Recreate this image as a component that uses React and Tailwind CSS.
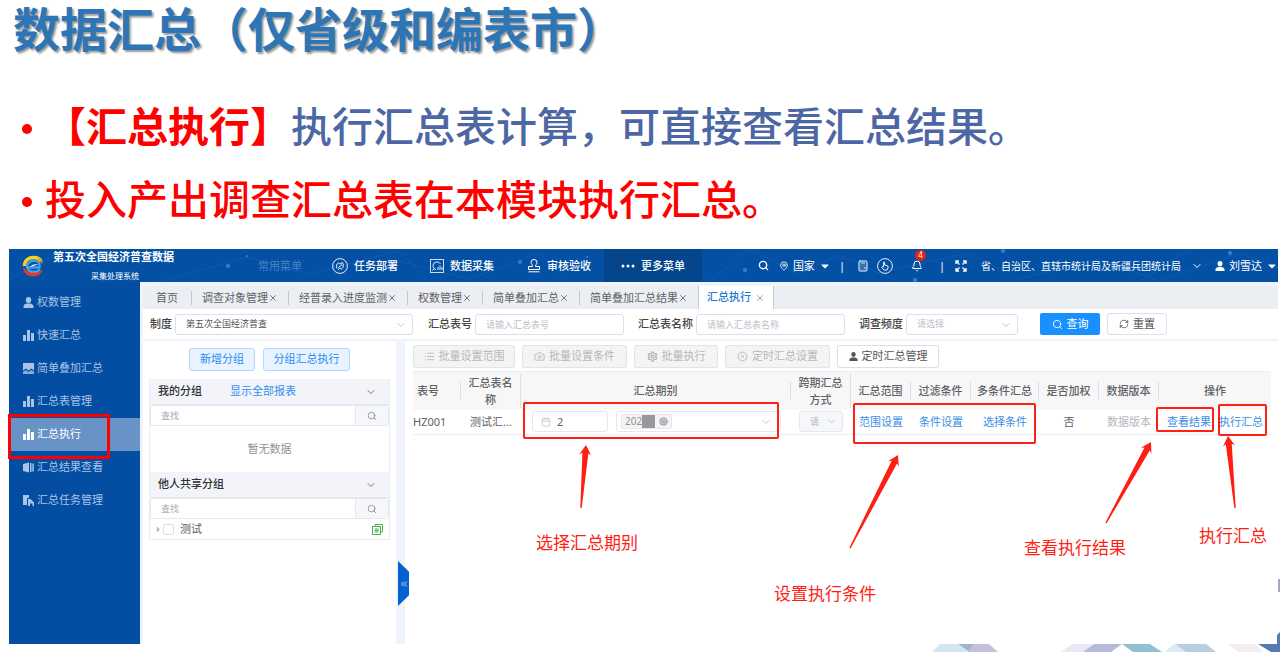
import {
  Camera,
  ChevronDown,
  ChevronsLeft,
  CircleX,
  Hexagon,
  List,
  MapPin,
  Bell,
  Calendar,
  Calculator,
  RefreshCw,
  Search,
  Settings,
  X,
} from 'lucide-react';
import React from 'react';
import { FaCaretDown, FaCaretRight } from 'react-icons/fa';

const RED = '#ff1e14';

const tabs = ['调查对象管理', '经普录入进度监测', '权数管理', '简单叠加汇总', '简单叠加汇总结果'];

const sideItems = [
  { label: '权数管理', icon: <PersonIcon className="size-[11px]" /> },
  { label: '快速汇总', icon: <BarsIcon /> },
  { label: '简单叠加汇总', icon: <PictureIcon /> },
  { label: '汇总表管理', icon: <BarsIcon /> },
  { label: '汇总执行', icon: <BarsIcon />, active: true },
  { label: '汇总结果查看', icon: <BookIcon /> },
  { label: '汇总任务管理', icon: <TaskIcon /> },
];

const columns = [
  { label: '表号', width: 'w-[48px]' },
  { label: '汇总表名称', width: 'w-[60px]' },
  { label: '汇总期别', width: '' },
  { label: '跨期汇总方式', width: 'w-[60px]' },
  { label: '汇总范围', width: 'w-[60px]' },
  { label: '过滤条件', width: 'w-[60px]' },
  { label: '多条件汇总', width: 'w-[68px]' },
  { label: '是否加权', width: 'w-[60px]' },
  { label: '数据版本', width: 'w-[60px]' },
  { label: '操作', width: 'w-[112px]' },
];

const arrows = [
  { tail: [572, 259], tip: [577, 196] },
  { tail: [841, 299], tip: [889, 206] },
  { tail: [1097, 274], tip: [1142, 193] },
  { tail: [1226, 259], tip: [1219, 187] },
];

function PersonIcon({ className }) {
  return (
    <svg viewBox="0 0 11 11" className={className} fill="currentColor">
      <ellipse cx="5.5" cy="3" rx="2.700" ry="3" />
      <path d="M0.500 11V9.500C0.500 7.500 2.500 7 4 6.600H7C8.500 7 10.500 7.500 10.500 9.500V11Z" />
    </svg>
  );
}

function BarsIcon() {
  return (
    <svg viewBox="0 0 11 11" className="size-[11px]" fill="currentColor">
      <rect x="0" y="5" width="3" height="6" />
      <rect x="4" y="0" width="3" height="11" />
      <rect x="8" y="3" width="3" height="8" />
    </svg>
  );
}

function PictureIcon() {
  return (
    <svg viewBox="0 0 11 11" className="size-[11px]" fill="currentColor">
      <path d="M0 0H11V7.500L8.500 5.500L5.500 7.500L3 5.500L0 7.500Z" />
      <path d="M0 8.800L3 7L5.500 9L8.500 7L11 8.800V11H0Z" fillOpacity="0.8" />
    </svg>
  );
}

function BookIcon() {
  return (
    <svg viewBox="0 0 11 11" className="size-[11px]" fill="currentColor">
      <path d="M0 2L6 0.500V10.500L0 9Z" />
      <rect x="7" y="1" width="1.500" height="9" />
      <rect x="9.300" y="1.500" width="1.500" height="8" />
    </svg>
  );
}

function TaskIcon() {
  return (
    <svg viewBox="0 0 11 11" className="size-[11px]" fill="currentColor">
      <path d="M0 0H6V3H4V10H0Z" />
      <path d="M5 4H7.500L11 7.500V11H9.500V8.500H7V11H5Z" />
    </svg>
  );
}

function Logo() {
  return (
    <svg viewBox="0 0 22 22" className="size-[22px] shrink-0" fill="none">
      <path d="M2.500 11C2.500 5 7 2.500 11.500 2.500C15 2.500 18 4 19 6.500" stroke="#f7d417" strokeWidth="3.500" />
      <path d="M15.500 2.500C18.500 3.500 20.500 6 20.700 9L17.500 6.500Z" fill="#f08a1d" />
      <path d="M1 11C1 18 5.500 21.500 11 21.500C15.500 21.500 19.500 19 20.800 14.500C15 18.500 4.500 19 1 11Z" fill="#e5352c" />
      <path
        d="M5.500 12.500H17.500C18.500 8 15.500 5.500 12 5.500C8 5.500 5 8.500 5 11.800C5 15 8 16.800 11.500 16.800C14 16.800 16.500 16 18 14.500"
        stroke="#3fa3ea"
        strokeWidth="2.400"
      />
      <path d="M8 12C10 9.500 13 9 16 9.500C14 10 12 11 8 12Z" fill="#fff" />
    </svg>
  );
}

function StampIcon() {
  return (
    <svg viewBox="0 0 14 14" className="size-[14px]" fill="none" stroke="currentColor">
      <path d="M5.500 7.500C5.500 5.500 4 5 4 3.200A3 2.700 0 0 1 10 3.200C10 5 8.500 5.500 8.500 7.500H12.500V10.500H1.500V7.500Z M1.500 12.800H12.500" />
    </svg>
  );
}

function DeployIcon() {
  return (
    <svg viewBox="0 0 16 16" className="size-4" fill="none" stroke="currentColor">
      <circle cx="8" cy="8" r="7.400" strokeWidth="0.9" />
      <path
        d="M5 10.500C4 8 4.500 5.500 6.500 5L8 6L10.500 4.500C12 6.500 11.500 10 9.500 11L8 10L6 11.500M6.500 9.500L10 6.500"
        strokeWidth="0.9"
      />
    </svg>
  );
}

function CollectIcon() {
  return (
    <svg viewBox="0 0 14 14" className="size-[14px]" fill="none" stroke="currentColor">
      <rect x="0.500" y="0.500" width="13" height="13" strokeOpacity="0.8" />
      <path d="M6 10.500C3.500 10 3 8 3 6.500A4 4 0 0 1 10.500 5M2.500 11.500L4 9.500M8 11V8M10 11V6.500M12 11V8" strokeWidth="0.9" />
    </svg>
  );
}

function HandIcon() {
  return (
    <svg viewBox="0 0 16 16" className="size-4" fill="none" stroke="currentColor">
      <circle cx="8" cy="8" r="7.400" strokeWidth="0.9" />
      <path d="M6.500 9V4.200Q7 3.500 7.600 4.200V7L11 8V10L10 12H7L4.600 9.200Q5.200 8 6.500 9Z" strokeWidth="0.9" />
    </svg>
  );
}

function ExpandIcon() {
  return (
    <svg viewBox="0 0 12 12" className="size-3" fill="none" stroke="currentColor" strokeWidth="1.300">
      <path d="M1 4V1H4M1 1L4.500 4.500M8 1H11V4M11 1L7.500 4.500M1 8V11H4M1 11L4.500 7.500M11 8V11H8M11 11L7.500 7.500" />
    </svg>
  );
}

function CopyIcon() {
  return (
    <svg viewBox="0 0 11 11" className="size-[11px]" fill="none" stroke="#4caf50">
      <path d="M3 2.500V0.500H10.500V8H8.500" />
      <rect x="0.500" y="2.500" width="8" height="8" />
      <path d="M2.500 5H6.500M2.500 6.500H6.500M2.500 8H6.500" />
    </svg>
  );
}

function HeaderPattern() {
  return (
    <svg className="pointer-events-none absolute inset-0 h-full w-full" stroke="#3f86c9" fill="#2f80cf" strokeOpacity="0.2">
      <path
        d="M0 30L50 5L110 28L160 0M150 33L238 8L300 25L390 2L420 33M390 12L460 30L530 4L560 33M700 33L740 0L790 25L830 6L890 33M860 26L960 4L1010 30L1090 10L1150 32L1230 4L1271 20M1130 33L1180 0"
        fill="none"
      />
      <circle cx="238" cy="7" r="1" />
      <circle cx="219" cy="17" r="2" />
      <circle cx="511" cy="13" r="2" />
      <circle cx="578" cy="8" r="1" />
      <circle cx="736" cy="21" r="2" />
      <circle cx="994" cy="2" r="2" />
      <circle cx="906" cy="31" r="2" />
      <circle cx="1221" cy="4" r="2" />
    </svg>
  );
}

function TopBar() {
  return (
    <header className="relative flex h-[33px] items-center bg-[#0450a5] text-[11px] leading-4 text-white">
      <HeaderPattern />
      <div className="relative flex w-[249px] items-center gap-[9px] pl-[13px]">
        <Logo />
        <div className="w-[125px] whitespace-nowrap">
          <div className="font-bold leading-[14px]">第五次全国经济普查数据</div>
          <div className="mt-[6px] pl-[38px] text-[8px] leading-[12px]">采集处理系统</div>
        </div>
      </div>
      <nav className="relative flex h-full items-center whitespace-nowrap">
        <span className="w-[74px] text-[#4a82c2]">常用菜单</span>
        <a href="#deploy" className="flex w-[98px] items-center gap-1.5 font-medium">
          <DeployIcon />
          任务部署
        </a>
        <a href="#collect" className="flex w-[97px] items-center gap-1.5 font-medium">
          <CollectIcon />
          数据采集
        </a>
        <a href="#review" className="flex w-[77px] items-center gap-1.5 font-medium">
          <StampIcon />
          审核验收
        </a>
        <button type="button" className="flex h-full w-[98px] items-center justify-center gap-1.5 bg-[#04458c] font-medium">
          <svg viewBox="0 0 14 4" className="h-1 w-3.5" fill="currentColor">
            <circle cx="2" cy="2" r="1.500" />
            <circle cx="7" cy="2" r="1.500" />
            <circle cx="12" cy="2" r="1.500" />
          </svg>
          更多菜单
        </button>
      </nav>
      <div className="relative ml-auto flex items-center whitespace-nowrap">
        <button type="button" aria-label="搜索" className="mr-2.5">
          <Search className="size-[11px]" strokeWidth={3} />
        </button>
        <button type="button" className="flex items-center gap-1">
          <MapPin className="size-[10px]" />
          国家
          <FaCaretDown className="size-3" />
        </button>
        <span className="ml-2 mr-3">|</span>
        <Calculator className="size-3" />
        <span className="ml-2">
          <HandIcon />
        </span>
        <button type="button" aria-label="消息" className="relative ml-[18px]">
          <Bell className="size-3" />
          <span className="absolute -top-2.5 left-1 flex size-[11px] items-center justify-center rounded-full bg-[#e2240f] text-[8px] leading-none">
            4
          </span>
        </button>
        <span className="ml-4 mr-2.5">|</span>
        <ExpandIcon />
        <button type="button" className="ml-3.5 flex items-center gap-2.5 text-[10px]">
          省、自治区、直辖市统计局及新疆兵团统计局
          <ChevronDown className="size-3" />
        </button>
        <button type="button" className="ml-3 flex items-center gap-1">
          <PersonIcon className="size-[10px]" />
          刘雪达
          <FaCaretDown className="size-3" />
        </button>
      </div>
    </header>
  );
}

function Sidebar() {
  return (
    <aside className="w-[131px] shrink-0 bg-[#034ea2] pt-1">
      {sideItems.map((item) => (
        <a
          key={item.label}
          href={`#${item.label}`}
          className={[
            'flex h-[33px] items-center gap-[3px] pl-[14px] text-[11px]',
            item.active ? 'bg-[#6893c6] text-white' : 'text-[#a9c4e4]',
          ].join(' ')}
        >
          <span className="flex w-[11px] justify-center">{item.icon}</span>
          {item.label}
        </a>
      ))}
    </aside>
  );
}

function TabBar() {
  return (
    <div className="flex h-[23px] items-center whitespace-nowrap rounded-t bg-[#ebeef2] text-[11px] text-[#606266]">
      <a href="#home" className="border-r border-[#c4c7cc] px-[13px] leading-[14px]">
        首页
      </a>
      {tabs.map((tab, i) => (
        <span
          key={tab}
          className={[
            'flex items-center px-[10px] leading-[14px]',
            i < tabs.length - 1 ? 'border-r border-[#c4c7cc]' : '',
          ].join(' ')}
        >
          {tab}
          <button type="button" aria-label={`关闭${tab}`}>
            <X className="size-[10px]" />
          </button>
        </span>
      ))}
      <span className="flex h-full items-center gap-1 border-x border-[#c4c7cc] bg-white px-2 font-medium text-[#2479d8]">
        汇总执行
        <button type="button" aria-label="关闭汇总执行">
          <X className="size-[10px] text-[#909399]" />
        </button>
      </span>
    </div>
  );
}

function Select({ id, label, value, className, textClass }) {
  return (
    <span className={`relative block ${className}`}>
      <select
        id={id}
        aria-label={label}
        className={`h-[21px] w-full appearance-none rounded-[3px] border border-[#dcdfe6] bg-white pl-2.5 text-[9px] ${textClass}`}
      >
        <option>{value}</option>
      </select>
      <ChevronDown className="pointer-events-none absolute right-1.5 top-[5px] size-3 text-[#c0c4cc]" />
    </span>
  );
}

function Filters() {
  const inputClass =
    'h-[21px] w-[149px] rounded-[3px] border border-[#dcdfe6] bg-white px-2.5 text-[9px] placeholder:text-[#bcc0c8]';
  const labelClass = 'whitespace-nowrap font-medium text-[#444]';
  return (
    <form className="flex h-[30px] items-center bg-white pl-[7px] text-[11px]">
      <label htmlFor="system" className={`${labelClass} mr-[3px]`}>
        制度
      </label>
      <Select id="system" value="第五次全国经济普查" className="w-[238px]" textClass="text-[#555]" />
      <label htmlFor="code" className={`${labelClass} ml-[15px] mr-[3px]`}>
        汇总表号
      </label>
      <input id="code" placeholder="请输入汇总表号" className={inputClass} />
      <label htmlFor="name" className={`${labelClass} ml-[14px] mr-[3px]`}>
        汇总表名称
      </label>
      <input id="name" placeholder="请输入汇总表名称" className={inputClass} />
      <label htmlFor="freq" className={`${labelClass} ml-[14px] mr-[3px]`}>
        调查频度
      </label>
      <Select id="freq" value="请选择" className="w-[112px]" textClass="text-[#bcc0c8]" />
      <button type="button" className="ml-[22px] flex h-[22px] w-[60px] items-center justify-center gap-1 rounded-[2px] bg-[#1890ff] text-white">
        <Search className="size-[11px]" />
        查询
      </button>
      <button
        type="button"
        className="ml-[7px] flex h-[22px] w-[60px] items-center justify-center gap-1 rounded-[3px] border border-[#dcdfe6] text-[#555]"
      >
        <RefreshCw className="size-[10px]" />
        重置
      </button>
    </form>
  );
}

function GroupSearch({ label }) {
  return (
    <div className="flex h-[21px] rounded-[3px] border border-[#e4e7ed]">
      <input aria-label={label} placeholder="查找" className="min-w-0 flex-1 px-2.5 text-[9px] placeholder:text-[#a8abb2]" />
      <button type="button" aria-label={`搜索${label}`} className="flex w-[33px] items-center justify-center border-l border-[#e4e7ed] bg-[#f5f7fa]">
        <Search className="size-[10px] text-[#888]" />
      </button>
    </div>
  );
}

function GroupHeader({ title, children }) {
  return (
    <div className="flex h-[26px] items-center border-b border-[#e3e5ea] bg-[#f3f4f9] pl-2 pr-3">
      <span className="font-medium text-[#303133]">{title}</span>
      {children}
      <ChevronDown className="ml-auto size-3 text-[#777]" />
    </div>
  );
}

function GroupPanel() {
  const blueButton = 'h-[23px] rounded-[3px] border border-[#b3d8ff] bg-[#e8f3ff] text-[#1f8cf5]';
  return (
    <section className="w-[253px] shrink-0 bg-white px-[6px] pt-[7px] text-[11px]">
      <div className="flex justify-center gap-2">
        <button type="button" className={`${blueButton} w-[66px]`}>
          新增分组
        </button>
        <button type="button" className={`${blueButton} w-[87px]`}>
          分组汇总执行
        </button>
      </div>
      <div className="mt-2 border border-t-0 border-[#ebedf2]">
        <GroupHeader title="我的分组">
          <a href="#all" className="ml-[28px] text-[#2f8ff0]">
            显示全部报表
          </a>
        </GroupHeader>
        <GroupSearch label="我的分组" />
        <p className="flex h-[46px] items-center justify-center text-[#909399]">暂无数据</p>
        <GroupHeader title="他人共享分组" />
        <GroupSearch label="他人共享分组" />
        <div className="flex h-5 items-center pl-1 pr-1.5 text-[#606266]">
          <FaCaretRight className="size-[9px] text-[#b0b4bb]" />
          <label className="flex items-center gap-1.5">
            <input type="checkbox" className="size-[11px] appearance-none rounded-[2px] border border-[#dcdfe6] bg-white" />
            测试
          </label>
          <span className="ml-auto">
            <CopyIcon />
          </span>
        </div>
      </div>
    </section>
  );
}

function Toolbar() {
  const base = 'flex h-[23px] items-center justify-center gap-1 rounded-[2px] border';
  const disabled = `${base} border-[#e2e4e8] bg-[#f4f4f5] text-[#b4b7bc]`;
  return (
    <div className="flex whitespace-nowrap text-[11px]">
      <button type="button" disabled className={`${disabled} w-[102px]`}>
        <List className="size-[11px]" />
        批量设置范围
      </button>
      <button type="button" disabled className={`${disabled} ml-[7px] w-[105px]`}>
        <Camera className="size-[11px]" />
        批量设置条件
      </button>
      <button type="button" disabled className={`${disabled} ml-[7px] w-[84px]`}>
        <Settings className="size-[11px]" strokeWidth={3} />
        批量执行
      </button>
      <button type="button" disabled className={`${disabled} ml-[7px] w-[105px]`}>
        <span className="relative flex items-center justify-center">
          <Hexagon className="size-[11px]" />
          <i className="absolute size-[3px] rounded-full border border-current" />
        </span>
        定时汇总设置
      </button>
      <button type="button" className={`${base} ml-[7px] w-[102px] border-[#dcdfe6] bg-white text-[#555]`}>
        <PersonIcon className="size-[9px]" />
        定时汇总管理
      </button>
    </div>
  );
}

function PeriodCell() {
  return (
    <div className="flex gap-2 pl-[11px] pr-[10px]">
      <label className="flex h-[21px] w-[76px] items-center gap-1.5 rounded-[3px] border border-[#e4e7ed] pl-2">
        <Calendar className="size-[10px] shrink-0 text-[#c0c4cc]" />
        <input aria-label="期别" defaultValue="2" className="w-full min-w-0 text-[#606266]" />
      </label>
      <div className="flex h-[21px] flex-1 items-center justify-between rounded-[3px] border border-[#e4e7ed] pl-1 pr-2">
        <span className="flex h-[15px] items-center rounded-[2px] border border-[#e6e8ec] bg-[#f4f4f5] px-[3px] text-[10px] text-[#909399]">
          202
          <span className="h-[13px] w-[13px] bg-[#96989c]" />
          <button type="button" aria-label="移除期别" className="ml-1">
            <CircleX className="size-[9px] fill-[#c0c4cc]" />
          </button>
        </span>
        <ChevronDown className="size-3 text-[#c0c4cc]" />
      </div>
    </div>
  );
}

function SummaryTable() {
  const link = 'text-[#3a8ee6]';
  return (
    <table className="mt-[3px] w-full table-fixed text-center text-[11px] text-[#606266]">
      <thead className="bg-[#f7f7f8]">
        <tr className="h-[38px]">
          {columns.map((col, i) => (
            <th key={col.label} className={`border-t border-[#ebeef5] p-0 font-medium leading-[17px] ${col.width}`}>
              <div
                className={[
                  'px-1',
                  i < columns.length - 1 ? 'border-r border-[#dcdfe6]' : '',
                  i === 0 ? 'text-left' : '',
                ].join(' ')}
              >
                {col.label}
              </div>
            </th>
          ))}
        </tr>
      </thead>
      <tbody>
        <tr className="h-[25px] whitespace-nowrap border-b border-[#ebeef5]">
          <td className="text-left">HZ001</td>
          <td>测试汇...</td>
          <td>
            <PeriodCell />
          </td>
          <td className="px-2">
            <span className="relative block">
              <select
                aria-label="跨期汇总方式"
                disabled
                className="h-[21px] w-full appearance-none rounded-[3px] border border-[#e4e7ed] bg-[#f5f7fa] pl-2.5 text-[9px] text-[#b4b8c0]"
              >
                <option>请</option>
              </select>
              <ChevronDown className="absolute right-1.5 top-[5px] size-[11px] text-[#c0c4cc]" />
            </span>
          </td>
          <td>
            <a href="#range" className={link}>范围设置</a>
          </td>
          <td>
            <a href="#filter" className={link}>条件设置</a>
          </td>
          <td>
            <a href="#multi" className={link}>选择条件</a>
          </td>
          <td>否</td>
          <td className="text-[#b4b7bc]">数据版本</td>
          <td>
            <span className="flex justify-center gap-2">
              <a href="#result" className={link}>查看结果</a>
              <a href="#run" className={link}>执行汇总</a>
            </span>
          </td>
        </tr>
      </tbody>
    </table>
  );
}

function arrowPoints({ tail, tip }) {
  const [x1, y1] = tail;
  const [x2, y2] = tip;
  const len = Math.hypot(x2 - x1, y2 - y1);
  const ux = (x2 - x1) / len;
  const uy = (y2 - y1) / len;
  const at = (back, side) => `${x2 - ux * back - uy * side},${y2 - uy * back + ux * side}`;
  return [at(0, 0), at(10, 6), at(8, 3), at(len, 0.7), at(len, -0.7), at(8, -3), at(10, -6)].join(' ');
}

// Red marks that lie over the running screen.
function Annotations() {
  const frame = 'absolute rounded-[2px] border-2 border-[#ff1e14]';
  const note = 'absolute whitespace-nowrap text-[17px] leading-6 text-[#ff1e14]';
  return (
    <div className="pointer-events-none absolute inset-0">
      <div className="absolute -left-px top-[165px] h-[45px] w-[102px] border-[3px] border-[#fe0000]" />
      <div className={`${frame} left-[514px] top-[153px] h-[37px] w-[256px]`} />
      <div className={`${frame} left-[844px] top-[154px] h-[41px] w-[183px]`} />
      <div className={`${frame} left-[1147px] top-[158px] h-[25px] w-[58px]`} />
      <div className={`${frame} left-[1209px] top-[155px] h-[32px] w-[49px]`} />
      <svg className="absolute inset-0 h-full w-full" fill={RED}>
        {arrows.map((arrow) => (
          <polygon key={arrow.tail.join()} points={arrowPoints(arrow)} />
        ))}
      </svg>
      <span className={`${note} left-[527px] top-[282px]`}>选择汇总期别</span>
      <span className={`${note} left-[765px] top-[333px]`}>设置执行条件</span>
      <span className={`${note} left-[1015px] top-[287px]`}>查看执行结果</span>
      <span className={`${note} left-[1190px] top-[275px]`}>执行汇总</span>
    </div>
  );
}

function SlideDecoration() {
  return (
    <svg className="pointer-events-none absolute bottom-0 right-0 h-[74px] w-[350px]" viewBox="0 0 350 74">
      <path d="M348 1h2v13h-2z" fill="#a6a6d2" />
      <path d="M10 66H28L42 74H2Z" fill="#d3e6ee" />
      <path d="M28 66H45V74H40Z" fill="#9fb3cf" />
      <path d="M43 66H59L68 74H38Z" fill="#c3bfdc" />
      <path d="M142 66H164L153 74H131Z" fill="#e8e9f4" />
      <path d="M164 66H192L181 74H153Z" fill="#b7b9db" />
      <path d="M192 66H220L232 74H203Z" fill="#92bfd1" />
      <path d="M244 66H252L262 74H235Z" fill="#d9ecf2" />
      <path d="M246 66H276L286 74H256Z" fill="#b8cde1" />
      <path d="M298 66H325L333 74H308Z" fill="#f3edf2" />
      <path d="M328 66H347V57L350 54V74H341Z" fill="#5879b3" />
    </svg>
  );
}

export default function App() {
  return (
    <div className="relative min-h-screen bg-white pb-2 pl-[9px] pr-[2px] font-['Noto_Sans','Noto_Sans_CJK_SC',sans-serif]">
      <div className="whitespace-nowrap font-['Liberation_Sans','Noto_Sans_CJK_SC',sans-serif]">
        <h1 className="pl-1 text-[47px] font-bold leading-[61px] text-[#2e75b6] [text-shadow:2px_2px_2px_rgba(0,0,0,0.4)]">
          数据汇总（仅省级和编表市）
        </h1>
        <ul className="mt-[31px] pl-[10px] text-[41px] font-medium leading-[73px]">
          <li className="flex text-[#4d67a5]">
            <span className="flex w-[26px] items-center pl-[3px]">
              <i className="size-[10px] rounded-full bg-[#fe0000]" />
            </span>
            <b className="text-[#fe0000]">【汇总执行】</b>
            执行汇总表计算，可直接查看汇总结果。
          </li>
          <li className="flex text-[#fe0000]">
            <span className="flex w-[26px] items-center pl-[3px]">
              <i className="size-[10px] rounded-full bg-[#fe0000]" />
            </span>
            投入产出调查汇总表在本模块执行汇总。
          </li>
        </ul>
      </div>

      <div className="relative mt-[11px] flex flex-col">
        <TopBar />
        <div className="flex min-h-[362px]">
          <Sidebar />
          <div className="flex min-w-0 flex-1 flex-col bg-[#eef3fc] pl-[3px] pt-1">
            <TabBar />
            <Filters />
            <div className="mt-[2px] flex flex-1 gap-[9px]">
              <GroupPanel />
              <section className="relative min-w-0 flex-1 bg-white pl-2 pr-[7px] pt-1">
                <Toolbar />
                <SummaryTable />
                <button
                  type="button"
                  aria-label="收起分组"
                  className="absolute -left-[7px] top-[220px] flex h-[45px] w-[11px] items-center justify-center bg-[#0560d0] text-white [clip-path:polygon(0_0,100%_24%,100%_76%,0_100%)]"
                >
                  <ChevronsLeft className="size-[10px]" />
                </button>
              </section>
            </div>
          </div>
        </div>
        <Annotations />
      </div>
      <SlideDecoration />
    </div>
  );
}
